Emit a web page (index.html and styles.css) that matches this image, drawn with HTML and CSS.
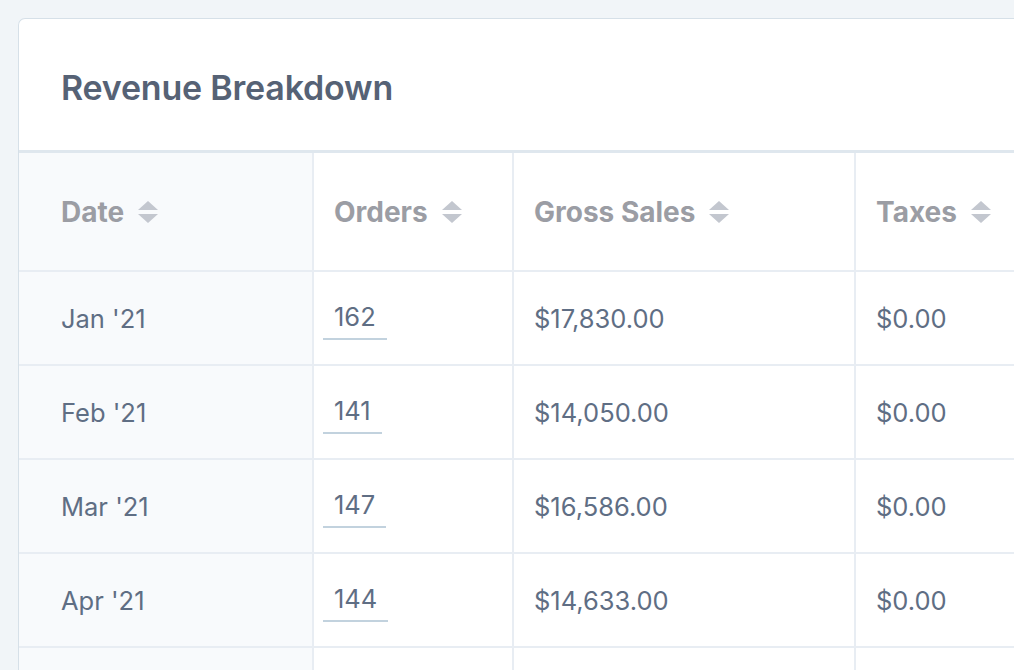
FILE: index.html
```html
<!DOCTYPE html>
<html lang="en">
<head>
<meta charset="utf-8">
<title>Revenue Breakdown</title>
<link rel="stylesheet" href="styles.css">
</head>
<body>
<section class="card">
  <header class="card-header">
    <h2 class="card-title">Revenue Breakdown</h2>
  </header>
  <table class="report">
    <colgroup>
      <col class="col-date">
      <col class="col-orders">
      <col class="col-gross">
      <col class="col-taxes">
    </colgroup>
    <thead>
      <tr>
        <th class="date-cell"><span class="th-inner">Date<svg class="sort" viewBox="0 0 20 24" aria-hidden="true"><path d="M10 1 L20 10 L0 10 Z"/><path d="M0 14 L20 14 L10 23 Z"/></svg></span></th>
        <th><span class="th-inner">Orders<svg class="sort" viewBox="0 0 20 24" aria-hidden="true"><path d="M10 1 L20 10 L0 10 Z"/><path d="M0 14 L20 14 L10 23 Z"/></svg></span></th>
        <th><span class="th-inner">Gross Sales<svg class="sort" viewBox="0 0 20 24" aria-hidden="true"><path d="M10 1 L20 10 L0 10 Z"/><path d="M0 14 L20 14 L10 23 Z"/></svg></span></th>
        <th><span class="th-inner">Taxes<svg class="sort" viewBox="0 0 20 24" aria-hidden="true"><path d="M10 1 L20 10 L0 10 Z"/><path d="M0 14 L20 14 L10 23 Z"/></svg></span></th>
      </tr>
    </thead>
    <tbody>
      <tr>
        <td class="date-cell">Jan '21</td>
        <td class="orders-cell"><a class="order-link" href="#">162</a></td>
        <td>$17,830.00</td>
        <td>$0.00</td>
      </tr>
      <tr>
        <td class="date-cell">Feb '21</td>
        <td class="orders-cell"><a class="order-link" href="#">141</a></td>
        <td>$14,050.00</td>
        <td>$0.00</td>
      </tr>
      <tr>
        <td class="date-cell">Mar '21</td>
        <td class="orders-cell"><a class="order-link" href="#">147</a></td>
        <td>$16,586.00</td>
        <td>$0.00</td>
      </tr>
      <tr>
        <td class="date-cell">Apr '21</td>
        <td class="orders-cell"><a class="order-link" href="#">144</a></td>
        <td>$14,633.00</td>
        <td>$0.00</td>
      </tr>
      <tr class="partial-row">
        <td class="date-cell"></td>
        <td class="orders-cell"></td>
        <td></td>
        <td></td>
      </tr>
    </tbody>
  </table>
</section>
</body>
</html>
```

FILE: styles.css
```css
html, body {
  margin: 0;
  padding: 0;
  height: 100%;
  overflow: hidden;
}

body {
  background: #f1f5f8;
  font-family: Inter, "Noto Sans", "Liberation Sans", sans-serif;
  padding: 18px 0 0 18px;
  box-sizing: border-box;
}

.card {
  width: 1000px;
  background: #ffffff;
  border: 1px solid #d6e0e8;
  border-right: none;
  border-bottom: none;
  border-radius: 7px 0 0 0;
  overflow: hidden;
}

.card-header {
  height: 134px;
  display: flex;
  align-items: center;
  padding: 6px 42px 0;
  box-sizing: border-box;
  border-bottom: 3px solid #dfe7ee;
}

.card-title {
  margin: 0;
  font-size: 34px;
  font-weight: 600;
  color: #566275;
  letter-spacing: -0.2px;
}

.report {
  border-collapse: collapse;
  table-layout: fixed;
  width: 1000px;
}

.col-date { width: 294px; }
.col-orders { width: 200px; }
.col-gross { width: 342px; }
.col-taxes { width: 164px; }

.report th,
.report td {
  border: 2px solid #e8edf3;
  padding: 0 20px;
  text-align: left;
  vertical-align: middle;
  white-space: nowrap;
}

.report tr > :first-child {
  border-left: none;
}

.report tr > :last-child {
  border-right: none;
}

.report thead tr > * {
  border-top: none;
}

.report th {
  height: 117px;
  font-size: 28px;
  font-weight: 700;
  color: #9b9da4;
}

.th-inner {
  display: inline-flex;
  align-items: center;
  gap: 14px;
}

.sort {
  width: 20px;
  height: 24px;
  fill: #c3c7cf;
}

.report td {
  height: 92px;
  font-size: 25.5px;
  font-weight: 400;
  color: #5f6e84;
}

.report .partial-row td {
  height: 40px;
}

.report .date-cell {
  background: #f8fafc;
  padding-left: 42px;
}

.report .orders-cell {
  padding-left: 9px;
}

.order-link {
  display: inline-block;
  padding: 4px 11px 6px;
  color: #5f6e84;
  text-decoration: none;
  border-bottom: 2px solid #c2d2de;
}
```
